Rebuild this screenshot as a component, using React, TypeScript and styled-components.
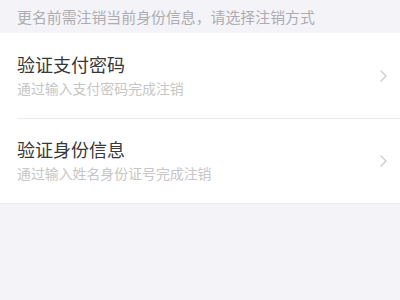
import React from "react";
import styled, { createGlobalStyle } from "styled-components";

const GlobalStyle = createGlobalStyle`
  html, body {
    margin: 0;
    padding: 0;
    background: #f4f3f8;
    font-family: "Noto Sans CJK SC", "Noto Sans", sans-serif;
  }
`;

const Page = styled.div`
  width: 400px;
  height: 300px;
  display: flex;
  flex-direction: column;
  background: #f4f3f8;
`;

const Notice = styled.div`
  height: 33px;
  display: flex;
  align-items: center;
  padding: 0 17px;
  font-size: 14.9px;
  color: #adadb1;
`;

const List = styled.div`
  background: #ffffff;
  padding-left: 17px;
  box-shadow: 0 1px 1px rgba(0, 0, 0, 0.03);
`;

const Row = styled.div<{ $last?: boolean }>`
  height: ${({ $last }) => ($last ? "84px" : "85px")};
  display: flex;
  align-items: center;
  padding-right: 13px;
  border-bottom: ${({ $last }) => ($last ? "none" : "1px solid #ebebeb")};
`;

const RowText = styled.div`
  flex: 1;
  display: flex;
  flex-direction: column;
  gap: 4px;
  margin-top: -2px;
`;

const Title = styled.div`
  font-size: 18px;
  line-height: 22px;
  color: #383838;
`;

const Sub = styled.div`
  font-size: 13.9px;
  line-height: 18px;
  color: #c6c6c6;
`;

const Chevron = styled.svg`
  width: 7px;
  height: 12px;
  flex-shrink: 0;
`;

const Arrow = () => (
  <Chevron viewBox="0 0 7 12">
    <polyline
      points="1,1 6,6 1,11"
      fill="none"
      stroke="#cdcdcd"
      strokeWidth="1.4"
      strokeLinecap="round"
      strokeLinejoin="round"
    />
  </Chevron>
);

const options = [
  { title: "验证支付密码", sub: "通过输入支付密码完成注销" },
  { title: "验证身份信息", sub: "通过输入姓名身份证号完成注销" },
];

const App = () => (
  <Page>
    <GlobalStyle />
    <Notice>更名前需注销当前身份信息，请选择注销方式</Notice>
    <List>
      {options.map((o, i) => (
        <Row key={o.title} $last={i === options.length - 1}>
          <RowText>
            <Title>{o.title}</Title>
            <Sub>{o.sub}</Sub>
          </RowText>
          <Arrow />
        </Row>
      ))}
    </List>
  </Page>
);

export default App;
